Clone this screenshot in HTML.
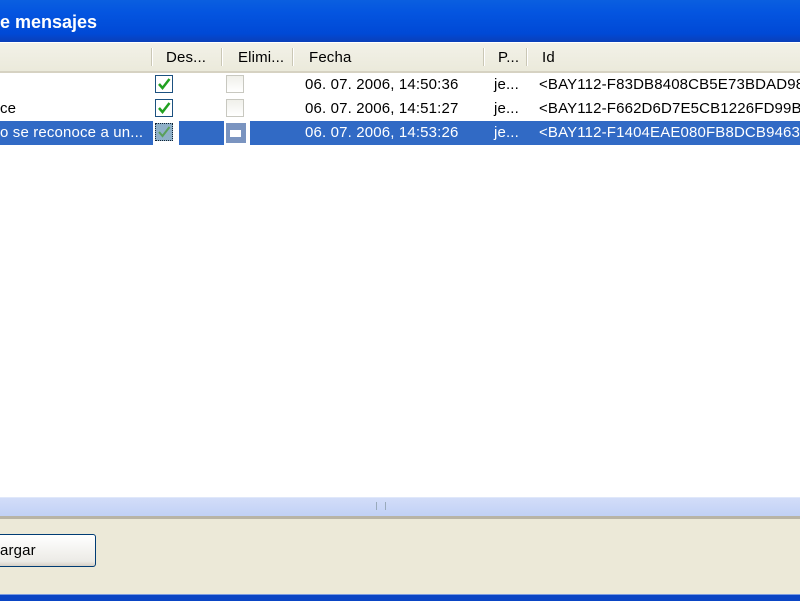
<!DOCTYPE html>
<html><head><style>
body{margin:0;width:800px;height:600px;overflow:hidden;background:#fff;font-family:"Liberation Sans",sans-serif;font-size:15px;letter-spacing:0.15px;position:relative}
.a{position:absolute}
.title{left:0;top:0;width:800px;height:42px;background:linear-gradient(#0a5fe0,#0455e0 30%,#0049d6 80%,#0a3fb8);color:#fff;font-weight:bold;font-size:18px;letter-spacing:0}
.hdr{left:0;top:43px;width:800px;height:28px;background:linear-gradient(#f2f1e8,#ebeadb);border-bottom:2px solid #d6d2c2}
.sep{top:48px;width:1px;height:18px;background:#cac7b5;border-right:1px solid #fff}
.t{white-space:nowrap}
.cb{width:18px;height:18px;border:1px solid #1c5180;background:#fff;box-sizing:border-box}
.cbg{width:18px;height:18px;border:1px solid #c8c8c0;background:linear-gradient(#f0f0ea,#fff);box-sizing:border-box}
</style></head><body>
<div class="a title"><span class="a" style="left:0;top:12px">e mensajes</span></div>
<div class="a hdr"></div>
<div class="a sep" style="left:151px"></div>
<div class="a sep" style="left:221px"></div>
<div class="a sep" style="left:292px"></div>
<div class="a sep" style="left:483px"></div>
<div class="a sep" style="left:526px"></div>
<div class="a t" style="left:166px;top:49px">Des...</div>
<div class="a t" style="left:238px;top:49px">Elimi...</div>
<div class="a t" style="left:309px;top:49px">Fecha</div>
<div class="a t" style="left:498px;top:49px">P...</div>
<div class="a t" style="left:542px;top:49px">Id</div>

<div class="a cb" style="left:155px;top:75px"><svg width="16" height="16"><path d="M3 8l3.5 4 7-9" stroke="#21a121" stroke-width="2.5" fill="none"/></svg></div>
<div class="a cbg" style="left:226px;top:75px"></div>
<div class="a t" style="left:305px;top:76px">06. 07. 2006, 14:50:36</div>
<div class="a t" style="left:494px;top:76px">je...</div>
<div class="a t" style="left:539px;top:76px">&lt;BAY112-F83DB8408CB5E73BDAD98</div>

<div class="a t" style="left:0;top:100px">ce</div>
<div class="a cb" style="left:155px;top:99px"><svg width="16" height="16"><path d="M3 8l3.5 4 7-9" stroke="#21a121" stroke-width="2.5" fill="none"/></svg></div>
<div class="a cbg" style="left:226px;top:99px"></div>
<div class="a t" style="left:305px;top:100px">06. 07. 2006, 14:51:27</div>
<div class="a t" style="left:494px;top:100px">je...</div>
<div class="a t" style="left:539px;top:100px">&lt;BAY112-F662D6D7E5CB1226FD99B</div>

<div class="a" style="left:0;top:121px;width:153px;height:24px;background:#316ac5"></div>
<div class="a" style="left:179px;top:121px;width:45px;height:24px;background:#316ac5"></div>
<div class="a" style="left:250px;top:121px;width:550px;height:24px;background:#316ac5"></div>
<div class="a cb" style="left:155px;top:123px;background:#8fb0c8;border:1px dotted #123"><svg width="16" height="16"><path d="M3 8l3.5 4 7-9" stroke="#5aa05a" stroke-width="2" fill="none"/></svg></div>
<div class="a" style="left:226px;top:123px;width:20px;height:20px;background:#7a94c0"><div class="a" style="left:4px;top:7px;width:11px;height:7px;background:#fff"></div></div>
<div class="a t" style="left:0;top:124px;color:#fff">o se reconoce a un...</div>
<div class="a t" style="left:305px;top:124px;color:#fff">06. 07. 2006, 14:53:26</div>
<div class="a t" style="left:494px;top:124px;color:#fff">je...</div>
<div class="a t" style="left:539px;top:124px;color:#fff">&lt;BAY112-F1404EAE080FB8DCB94635</div>

<div class="a" style="left:0;top:497px;width:800px;height:18px;background:linear-gradient(#d2ddf8,#c1d1f6);border-top:1px solid #e0e8fa"></div>
<div class="a" style="left:376px;top:502px;width:8px;height:8px;border-left:1px solid #9ab;border-right:1px solid #9ab"></div>
<div class="a" style="left:0;top:516px;width:800px;height:80px;background:#ece9d8;border-top:3px solid #b8b4a6"></div>
<div class="a" style="left:-10px;top:534px;width:104px;height:31px;border:1px solid #003c74;border-radius:3px;background:linear-gradient(#fff,#ecebe6 85%,#d6d0c5)"></div>
<div class="a t" style="left:0;top:542px">argar</div>
<div class="a" style="left:0;top:594px;width:800px;height:6px;background:#0a45c4;border-top:1px solid #7a9be0"></div>
</body></html>
